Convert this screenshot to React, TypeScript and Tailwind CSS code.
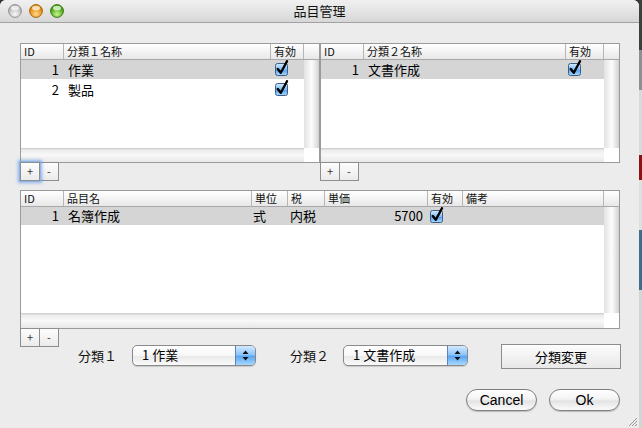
import type { ReactNode } from 'react';

type Col = { label: string; w: string; cell: string };
type Row = { sel?: boolean; cells: ReactNode[] };

function Check() {
  return (
    <svg width="15" height="17" viewBox="0 0 15 17">
      <defs>
        <linearGradient id="cb" x1="0" y1="0" x2="0" y2="1">
          <stop offset="0" stopColor="#d6ecff" />
          <stop offset="0.5" stopColor="#7dbcf6" />
          <stop offset="0.51" stopColor="#4f9ef0" />
          <stop offset="1" stopColor="#a9dbff" />
        </linearGradient>
      </defs>
      <rect x="1.5" y="3.5" width="12" height="12" rx="2" fill="url(#cb)" stroke="#3c5e86" />
      <path d="M3.8 9 L6.8 12.8 L13 1.2" fill="none" stroke="#000" strokeWidth="2.4" strokeLinecap="round" strokeLinejoin="round" />
    </svg>
  );
}

function Light({ c1, c2, edge }: { c1: string; c2: string; edge: string }) {
  const id = 'g' + c2.slice(1);
  return (
    <svg width="14" height="14" viewBox="0 0 14 14">
      <defs>
        <radialGradient id={id} cx="0.5" cy="0.75" r="0.6">
          <stop offset="0" stopColor={c1} />
          <stop offset="1" stopColor={c2} />
        </radialGradient>
      </defs>
      <circle cx="7" cy="7" r="6.4" fill={`url(#${id})`} stroke={edge} strokeWidth="0.9" />
      <ellipse cx="7" cy="4" rx="4" ry="2.3" fill="#fff" opacity="0.7" />
    </svg>
  );
}

function Table({ cols, rows, bodyH, rowH, scrollH }: { cols: Col[]; rows: Row[]; bodyH: string; rowH: string; scrollH: string }) {
  return (
    <div className="border border-[#9a9a9a] bg-white flex flex-col">
      <div className="h-[16px] flex border-b border-[#a8a8a8] bg-[linear-gradient(to_bottom,#ffffff,#f4f4f4_50%,#e7e7e7)]">
        {cols.map((c) => (
          <div key={c.label} className={`${c.w} shrink-0 border-r border-[#b6b6b6] pl-[3px] text-[11px] leading-[15px] text-[#111]`}>
            {c.label}
          </div>
        ))}
        <div className="flex-1" />
      </div>
      <div className={`flex ${bodyH}`}>
        <div className="flex-1 flex flex-col">
          {rows.map((r, i) => (
            <div key={i} className={`flex ${rowH} border-b border-white ${r.sel ? 'bg-[#d5d5d5]' : ''}`}>
              {cols.map((c, j) => (
                <div key={j} className={`${c.w} shrink-0 text-[13px] text-black ${c.cell}`}>
                  {r.cells[j]}
                </div>
              ))}
            </div>
          ))}
        </div>
        <div className="w-[15px] bg-[linear-gradient(to_right,#e2e2e2,#f1f1f1_30%,#fcfcfc_50%,#e9e9e9_75%,#d0d0d0)]" />
      </div>
      <div className={`flex ${scrollH}`}>
        <div className="flex-1 bg-[linear-gradient(to_bottom,#c8c8c8,#ececec_15%,#f8f8f8_50%,#e8e8e8)]" />
        <div className="w-[15px] bg-white" />
      </div>
    </div>
  );
}

function PlusMinus({ focus }: { focus?: boolean }) {
  const b = 'h-[19px] w-[20px] border border-[#8e8e8e] bg-[linear-gradient(to_bottom,#fdfdfd,#ebebeb)] text-[11px] leading-[16px] text-center text-[#333]';
  return (
    <div className="flex -mt-px">
      <div className={`${b} relative z-10 ${focus ? 'shadow-[0_0_0_1px_#8fb6e8,0_0_3px_2px_rgba(80,140,230,0.6)]' : ''}`}>+</div>
      <div className={`${b} -ml-px`}>-</div>
    </div>
  );
}

function Popup({ text, w }: { text: string; w: string }) {
  return (
    <div className={`${w} h-[21px] mt-[1px] flex border border-[#8a8a8a] rounded-[5px] overflow-hidden bg-[linear-gradient(to_bottom,#ffffff,#f7f7f7_50%,#eaeaea_55%,#fafafa)] shadow-[0_1px_1px_rgba(0,0,0,0.15)]`}>
      <div className="flex-1 pl-[9px] text-[13px] leading-[18px] text-black">{text}</div>
      <div className="w-[20px] border-l border-[#5b84bd] bg-[linear-gradient(to_bottom,#d3eaff,#8ec6fb_45%,#5ca6f2_55%,#a8d8ff)] flex items-center justify-center">
        <svg width="7" height="11" viewBox="0 0 7 11">
          <path d="M3.5 0.5 L6.5 4 L0.5 4 Z M0.5 7 L6.5 7 L3.5 10.5 Z" fill="#111" />
        </svg>
      </div>
    </div>
  );
}

const t1Cols: Col[] = [
  { label: 'ID', w: 'w-[43px]', cell: 'text-right pr-[5px]' },
  { label: '分類１名称', w: 'w-[207px]', cell: 'pl-[4px]' },
  { label: '有効', w: 'w-[33px]', cell: 'pl-[3px]' },
];
const t2Cols: Col[] = [
  { label: 'ID', w: 'w-[43px]', cell: 'text-right pr-[5px]' },
  { label: '分類２名称', w: 'w-[202px]', cell: 'pl-[4px]' },
  { label: '有効', w: 'w-[38px]', cell: 'pl-[1px]' },
];
const t3Cols: Col[] = [
  { label: 'ID', w: 'w-[43px]', cell: 'text-right pr-[5px]' },
  { label: '品目名', w: 'w-[188px]', cell: 'pl-[4px]' },
  { label: '単位', w: 'w-[36px]', cell: 'pl-[1px]' },
  { label: '税', w: 'w-[37px]', cell: 'pl-[2px]' },
  { label: '単価', w: 'w-[103px]', cell: 'text-right pr-[5px]' },
  { label: '有効', w: 'w-[35px]', cell: 'pl-[1px]' },
  { label: '備考', w: 'w-[141px]', cell: 'pl-[3px]' },
];

export default function App() {
  return (
    <div className="w-[642px] h-[428px] flex bg-[#2f3532] font-['Noto_Sans_CJK_JP',sans-serif] overflow-hidden">
      <div className="relative w-[639px] h-full flex flex-col bg-[#ececec] rounded-t-[6px] overflow-hidden">
        <div className="h-[23px] shrink-0 grid grid-cols-[1fr_auto_1fr] items-center border-b border-[#a2a2a2] bg-[linear-gradient(to_bottom,#f0f0f0,#e2e2e2_60%,#d6d6d6)]">
          <div className="flex items-center gap-[7px] pl-[8px]">
            <Light c1="#fafafa" c2="#b4b4b4" edge="#8a8a8a" />
            <Light c1="#ffd98a" c2="#e08300" edge="#9c5a00" />
            <Light c1="#c4f58a" c2="#3e9f0a" edge="#2c6e08" />
          </div>
          <div className="text-[13px] leading-[22px] text-[#111]">品目管理</div>
          <div />
        </div>

        <div className="flex-1 flex flex-col pt-[20px] pl-[20px] pr-[19px]">
          <div className="flex">
            <div className="w-[300px] flex flex-col">
              <Table
                cols={t1Cols}
                bodyH="h-[88px]"
                rowH="h-[20px] leading-[19px]"
                scrollH="h-[14px]"
                rows={[
                  { sel: true, cells: ['1', '作業', <Check key="c" />] },
                  { cells: ['2', '製品', <Check key="c" />] },
                ]}
              />
              <PlusMinus focus />
            </div>
            <div className="w-[300px] flex flex-col">
              <Table
                cols={t2Cols}
                bodyH="h-[88px]"
                rowH="h-[20px] leading-[19px]"
                scrollH="h-[14px]"
                rows={[{ sel: true, cells: ['1', '文書作成', <Check key="c" />] }]}
              />
              <PlusMinus />
            </div>
          </div>

          <div className="mt-[9px] flex flex-col">
            <Table
              cols={t3Cols}
              bodyH="h-[106px]"
              rowH="h-[19px] leading-[18px]"
              scrollH="h-[15px]"
              rows={[{ sel: true, cells: ['1', '名簿作成', '式', '内税', '5700', <Check key="c" />, ''] }]}
            />
            <div className="flex items-start">
              <PlusMinus />
              <div className="flex items-start pt-[15px] ml-[19px]">
                <div className="w-[54px] h-[21px] mt-[1px] text-[13px] leading-[21px] text-[#111]">分類１</div>
                <Popup text="1 作業" w="w-[124px]" />
                <div className="ml-[34px] w-[53px] h-[21px] mt-[1px] text-[13px] leading-[21px] text-[#111]">分類２</div>
                <Popup text="1 文書作成" w="w-[125px]" />
                <div className="ml-[33px] w-[120px] h-[25px] border border-[#8c8c8c] bg-[linear-gradient(to_bottom,#fdfdfd,#f2f2f2_50%,#e8e8e8)] text-center text-[13px] leading-[23px] text-black">
                  分類変更
                </div>
              </div>
            </div>
          </div>

          <div className="mt-[20px] flex justify-end gap-[12px] font-['Liberation_Sans',sans-serif]">
            <div className="w-[71px] h-[22px] rounded-full border border-[#7f7f7f] bg-[linear-gradient(to_bottom,#ffffff,#f3f3f3_45%,#e3e3e3_55%,#fbfbfb)] shadow-[0_1px_1px_rgba(0,0,0,0.2)] text-center text-[14px] leading-[20px] text-black">
              Cancel
            </div>
            <div className="w-[71px] h-[22px] rounded-full border border-[#7f7f7f] bg-[linear-gradient(to_bottom,#ffffff,#f3f3f3_45%,#e3e3e3_55%,#fbfbfb)] shadow-[0_1px_1px_rgba(0,0,0,0.2)] text-center text-[14px] leading-[20px] text-black">
              Ok
            </div>
          </div>
        </div>

        <svg className="absolute right-[1px] bottom-[1px]" width="11" height="11" viewBox="0 0 11 11">
          <path d="M10 2 L2 10 M10 5 L5 10 M10 8 L8 10" stroke="#9a9a9a" strokeWidth="1" />
        </svg>
      </div>
      <div className="w-[3px] flex flex-col">
        <div className="h-[50px] bg-[#3a403b]" />
        <div className="h-[40px] bg-[#8f8f8f]" />
        <div className="h-[65px] bg-[#d9d9d9]" />
        <div className="h-[25px] bg-[#8d1212]" />
        <div className="h-[50px] bg-[#dfdfdf]" />
        <div className="h-[60px] bg-[#3d6e8e]" />
        <div className="flex-1 bg-[#d4d4d4]" />
      </div>
    </div>
  );
}
